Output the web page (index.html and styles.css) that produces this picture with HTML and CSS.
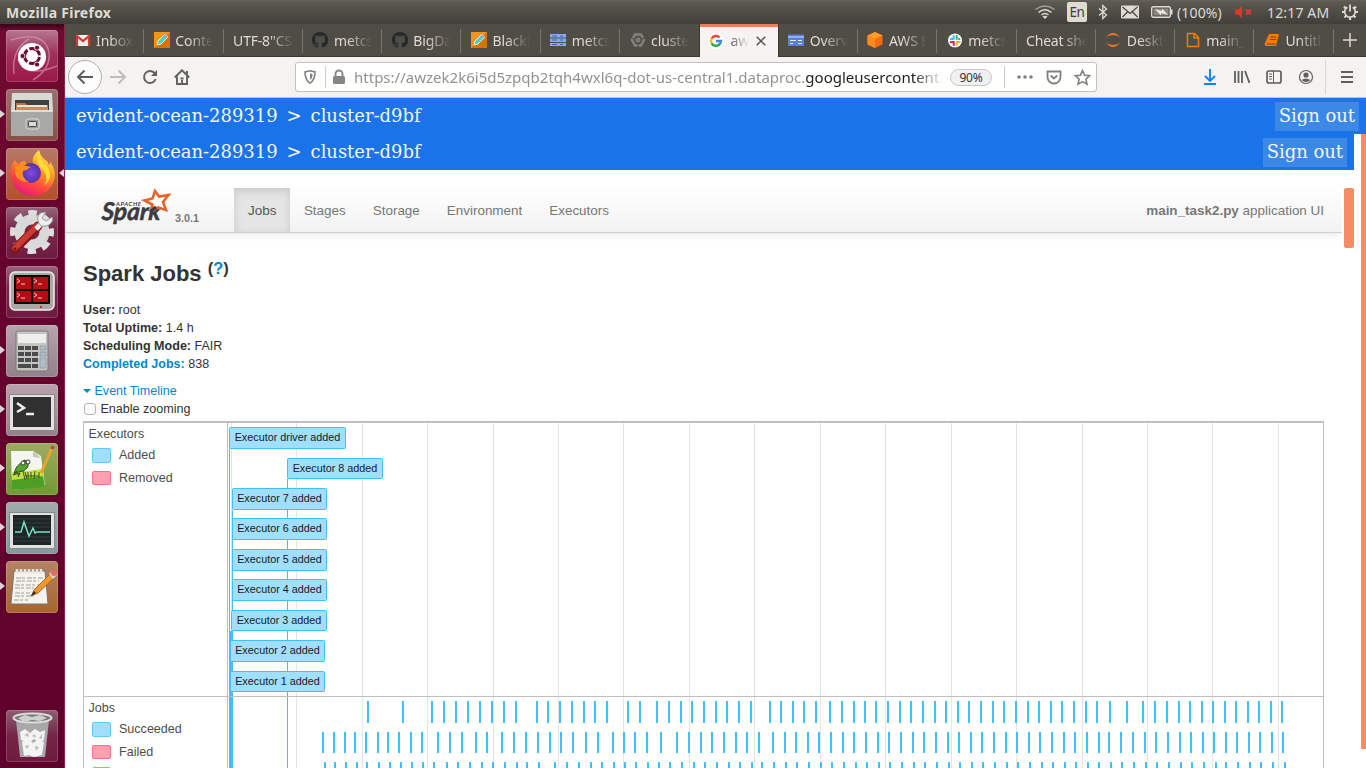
FILE: index.html
```html
<!DOCTYPE html>
<html lang="en">
<head>
<meta charset="utf-8">
<title>Spark Jobs</title>
<link rel="stylesheet" href="styles.css">
</head>
<body>
<div class="desktop">
<header class="panel">
  <span class="panel-title">Mozilla Firefox</span>
  <div class="indicators">
    <svg class="wifi" width="22" height="16" viewBox="0 0 22 16" fill="none" stroke="#dfdbd2" stroke-width="1.500"><path d="M1.500 5.500Q11-1.500 20.500 5.500" stroke="#a5a198"/><path d="M4.500 8.500Q11 3 17.500 8.500M7.500 11Q11 8 14.500 11"/><path d="M8.500 12.500Q11 10.800 13.500 12.500L11 15z" fill="#dfdbd2" stroke="none"/></svg>
    <span class="lang">En</span>
    <svg class="bt" width="12" height="18" viewBox="0 0 12 18" fill="none" stroke="#dfdbd2" stroke-width="1.300"><path d="M2 5.500L9.500 12 5.800 15.500V2.500L9.500 6 2 12.500"/></svg>
    <svg class="mail" width="18" height="14" viewBox="0 0 18 14"><rect width="18" height="13" y=".5" rx="1" fill="#dfdbd2"/><path d="M1.500 2L9 8.500 16.500 2M1.500 12l5-5M16.500 12l-5-5" fill="none" stroke="#45433d" stroke-width="1.200"/></svg>
    <svg class="batt" width="22" height="14" viewBox="0 0 22 14"><rect x=".7" y="1.700" width="18.600" height="10.600" rx="1.500" fill="none" stroke="#dfdbd2" stroke-width="1.400"/><path d="M20 4.500h1.500v5H20z" fill="#dfdbd2"/><path d="M2.500 3.500h15v7h-15z" fill="#8b8880"/><path d="M4 4l7 2V3.500L17 10l-7-2v2.500z" fill="#f0ece4"/></svg>
    <span class="percent">(100%)</span>
    <svg class="mute" width="18" height="14" viewBox="0 0 18 14"><path d="M0 4.500h3L7 1v12L3 9.500H0z" fill="#df382c"/><path d="M11 4.500l5 5M16 4.500l-5 5" stroke="#df382c" stroke-width="2"/></svg>
    <span class="clock">12:17 AM</span>
    <svg class="gear" width="18" height="18" viewBox="0 0 18 18" fill="none" stroke="#dfdbd2"><path d="M6.300 4.300a5.300 5.300 0 1 0 5.400 0" stroke-width="1.700"/><path d="M9 1.500v7" stroke-width="1.800"/><path d="M3 3.500l2 2M15 3.500l-2 2M1 9h2.500M14.500 9H17M3.500 14.500l2-2M14.500 14.500l-2-2M9 14.500V17" stroke-width="2.200"/></svg>
  </div>
</header>
<div class="workspace">
<nav class="launcher">
  <div class="tile dash"><svg viewBox="0 0 52 52"><g fill="none" stroke="#e7b4c8" stroke-opacity=".5" stroke-width="1.500"><path d="M5 10Q38 0 43 22Q45 39 27 50M8 44Q5 20 23 9M12 29Q19 49 51 36"/></g><circle cx="26" cy="27" r="14" fill="#fff"/><circle cx="26" cy="26" r="7.500" fill="none" stroke="#6d0930" stroke-width="3" stroke-dasharray="13.700 2" stroke-dashoffset="-1"/><g fill="#6d0930" stroke="#fff" stroke-width=".8"><circle cx="16.500" cy="26" r="2.500"/><circle cx="31" cy="17.700" r="2.500"/><circle cx="31" cy="34.500" r="2.500"/></g></svg></div>
  <div class="tile files run"><svg viewBox="0 0 52 52"><path d="M6 4h40l1 18H5z" fill="#d8d8d5"/><path d="M9 11h34v12H9z" fill="#414040"/><path d="M10 14h9l2 2h21v8H10z" fill="#bf7338"/><path d="M11 16h30v2H11z" fill="#f4e3ca"/><path d="M10 18h32v5H10z" fill="#d88843"/><path d="M5 21h42v26H5z" fill="#a8a8a6"/><path d="M5 21h42v2H5z" fill="#ddd"/><rect x="20" y="30" width="13" height="10" rx="2" fill="#999" stroke="#ddd"/><rect x="22.500" y="32.500" width="8" height="5" rx="1" fill="#ddd" stroke="#444"/></svg></div>
  <div class="tile firefox run focus"><svg viewBox="0 0 52 52"><defs><linearGradient id="fox" x1=".8" y1="0" x2=".3" y2="1"><stop stop-color="#fff04a"/><stop offset=".4" stop-color="#ff9a1f"/><stop offset=".75" stop-color="#ff3f45"/><stop offset="1" stop-color="#e31587"/></linearGradient><radialGradient id="globe"><stop stop-color="#7e49e4"/><stop offset="1" stop-color="#5931a8"/></radialGradient></defs><path d="M4 25Q5 17 9 12L12 16Q16 13 19 13L22 20Q24 15 27 16Q25 8 33 2Q34 9 41 13L43 17Q45 15 44 13Q52 25 47 35Q41 48 26 48Q7 46 4 25z" fill="url(#fox)"/><circle cx="25" cy="25" r="10" fill="url(#globe)"/><path d="M9 18Q19 17 25 19Q21 22 17 23Q15 30 23 34Q13 35 9 26z" fill="#ff8b21"/><path d="M34 3Q33 12 41 18Q48 29 39 37Q43 26 35 20Q28 13 34 3z" fill="#ffd93a"/></svg></div>
  <div class="tile settings"><svg viewBox="0 0 52 52"><circle cx="26" cy="25" r="18" fill="none" stroke="#dedede" stroke-width="8" stroke-dasharray="8 6.137" stroke-dashoffset="4"/><circle cx="26" cy="25" r="12.500" fill="none" stroke="#d9d9d9" stroke-width="10"/><path d="M9 42L32 19" stroke="#811616" stroke-width="9" stroke-linecap="round"/><path d="M9 41L31 19" stroke="#c83a32" stroke-width="6" stroke-linecap="round"/><path d="M30 22L36 16" stroke="#eee" stroke-width="5"/><path d="M40 5Q30 5 32 14Q34 22 43 18Q48 14 46 10L40 14 36 11z" fill="#eee" stroke="#999"/><circle cx="9" cy="42" r="1.500" fill="#701515"/></svg></div>
  <div class="tile term"><svg viewBox="0 0 52 52"><rect x="4" y="6" width="44" height="38" rx="5" fill="#aaa9a3" stroke="#eee" stroke-width="1.500"/><rect x="8" y="9" width="36" height="29" rx="1" fill="#160405"/><path d="M10 11h15v12H10zM27 11h15v12H27zM10 25h15v11H10zM27 25h15v11H27z" fill="#b60b13"/><path d="M11 13l3 2-3 2M15 18h4M28 13l3 2-3 2M32 18h4M11 27l3 2-3 2M15 32h4M28 27l3 2-3 2M32 32h4" fill="none" stroke="#f6c9c9"/><circle cx="35" cy="41" r="1" fill="#e00"/></svg></div>
  <div class="tile calc run"><svg viewBox="0 0 52 52"><rect x="10" y="6" width="32" height="40" rx="2" fill="#c5c4c2" stroke="#777"/><path d="M12 9h28v9H12z" fill="#eeeeed"/><g fill="#4b4c4b"><path d="M12 21h6v4h-6zM19 21h6v4h-6zM26 21h6v4h-6zM12 27h6v4h-6zM19 27h6v4h-6zM26 27h6v4h-6zM12 33h6v4h-6zM19 33h6v4h-6zM26 33h6v4h-6zM12 39h13v4H12zM26 39h6v4h-6z"/></g><path d="M34 21h6v4h-6zM34 27h6v4h-6zM34 33h6v10h-6z" fill="#aebdc8" stroke="#7c8790" stroke-width=".5"/></svg></div>
  <div class="tile prompt run"><svg viewBox="0 0 52 52"><rect x="3.500" y="10.500" width="45" height="36" fill="#e3e2e0" stroke="#8b8889"/><rect x="7" y="13" width="38" height="30" fill="#303030"/><path d="M11 19l7 5-7 4M20 30h8" fill="none" stroke="#eee" stroke-width="2.500"/></svg></div>
  <div class="tile npp run"><svg viewBox="0 0 52 52"><path d="M5 8h22l8 5 4 30-33 4z" fill="#f4f6ef"/><path d="M5 30l31-3 3 17-33 3z" fill="#4ba023"/><path d="M5 30l32-4 1 7-32 4z" fill="#c5dd45"/><path d="M27 7l8 8-8-1z" fill="#c5c9bb"/><path d="M8 30q3-9 8-10l2-3q5 1 4 4 1 4-5 7zM11 28l-4 4 7-2-2 4" fill="#55a431" stroke="#324d17"/><circle cx="17" cy="20" r="2" fill="#fff" stroke="#333"/><circle cx="22" cy="19" r="2" fill="#fff" stroke="#333"/><path d="M17 28l2 9M19 29l2 7M22 29v7M25 29v6M29 28l-1 8M33 29v6M19 33h14" stroke="#34581f" stroke-width="1"/><path d="M35 30l11-25" stroke="#e9a42a" stroke-width="3"/><path d="M46 6l1-3" stroke="#b34a5c" stroke-width="3.500"/></svg></div>
  <div class="tile monitor run"><svg viewBox="0 0 52 52"><rect x="3.500" y="10.500" width="45" height="36" fill="#e0e3e1" stroke="#838a88"/><rect x="7" y="13" width="38" height="30" fill="#1d2625"/><path d="M8 17h36M8 21h36M8 25h36M8 35h36M8 39h36" stroke="#3d4745" stroke-width=".7"/><path d="M9 30h6l3-10 5 14 4-8 2 5 2-1h13" fill="none" stroke="#75dfc5" stroke-width="1.500"/></svg></div>
  <div class="tile gedit run"><svg viewBox="0 0 52 52"><path d="M8 10h31l3 33H5z" fill="#f4f3ed" stroke="#777"/><g stroke="#a1a09b" stroke-width="1.100"><path d="M10 17h27M10 20h23M9 24h26M9 27h19M9 32h15M9 35h19M8 39h14" stroke-dasharray="5 1 3 2"/></g><path d="M11 8v5M15 8v5M19 8v5M23 8v5M27 8v5M31 8v5M35 8v5" stroke="#e8e7e3" stroke-width="2.500"/><path d="M25 35l4-7L44 13l4 4-16 15z" fill="#ef962d" stroke="#ad651c"/><path d="M43 13l3-3 5 4-4 4z" fill="#d3d3d0"/><circle cx="48" cy="12" r="3" fill="#e46b6c"/><path d="M25 35l3-5 2 2z" fill="#222"/></svg></div>
  <div class="tile trash"><svg viewBox="0 0 52 52"><path d="M10 10h33l-4 37H14z" fill="#a9a7a9"/><ellipse cx="26.500" cy="8" rx="19" ry="4.500" fill="#777" stroke="#ddd" stroke-width="2"/><path d="M12 8l7-3 7 2 8-2 7 3-7 3-8-1-8 2z" fill="#cfcfcf"/><g fill="#f3f3f3"><path d="M14 22l5-3 5 4 5-4 5 3 5-2-1 10-5 3-5-4-5 4-8-3zM16 32l6-4 5 5 6-4 5 3-2 13-8 2-5-2-5 1z"/></g><g fill="#bcbabd"><path d="M18 25l4-2 1 4zM26 26l3-2 1 4zM33 28l3-4v5zM19 36l4-1-2 4zM29 36l4 1-3 4z"/></g></svg></div>
</nav>
<main class="browser">
<div class="tabs">
  <div class="tab"><svg class="fav" viewBox="0 0 16 16"><path d="M1 3h14v11H1z" fill="#eee"/><path d="M2 14V4l6 5 6-5v10" fill="none" stroke="#d9352c" stroke-width="2.200"/></svg><span>Inbox (</span></div>
  <div class="tab"><svg class="fav" viewBox="0 0 16 16"><path d="M0 0h16v16H0z" fill="#f6921e"/><path d="M16 0v16H0z" fill="#d57500"/><path d="M3 13l1-4 7-7 3 3-7 7z" fill="#55cbc6" stroke="#e9f7d4"/><path d="M10 3l2-1 2 2-1 2z" fill="#ee88a5"/></svg><span>Content</span></div>
  <div class="tab nofav"><span>UTF-8''CSV</span></div>
  <div class="tab"><svg class="fav" viewBox="0 0 16 16"><use href="#cat"/></svg><span>metcs</span></div>
  <div class="tab"><svg class="fav" viewBox="0 0 16 16"><path id="cat" fill="#24292e" d="M8 0C3.580 0 0 3.580 0 8c0 3.540 2.290 6.530 5.470 7.590.4.070.55-.17.55-.38v-1.490c-2.010.37-2.530-.49-2.690-.94-.09-.23-.48-.94-.82-1.130-.28-.15-.68-.52-.01-.53.63-.01 1.080.58 1.230.82.72 1.210 1.870.87 2.330.66.070-.52.28-.87.51-1.070-1.780-.2-3.640-.89-3.640-3.950 0-.87.31-1.590.82-2.150-.08-.2-.36-1.020.08-2.120 0 0 .67-.21 2.200.82a7.600 7.600 0 0 1 4 0c1.530-1.040 2.200-.82 2.200-.82.44 1.100.16 1.920.08 2.120.51.56.82 1.270.82 2.150 0 3.070-1.870 3.750-3.650 3.950.29.25.54.73.54 1.480v2.200c0 .21.15.46.55.38A8 8 0 0 0 16 8c0-4.420-3.580-8-8-8z"/></svg><span>BigData</span></div>
  <div class="tab"><svg class="fav" viewBox="0 0 16 16"><path d="M0 0h16v16H0z" fill="#f6921e"/><path d="M16 0v16H0z" fill="#d57500"/><path d="M3 13l1-4 7-7 3 3-7 7z" fill="#55cbc6" stroke="#e9f7d4"/><path d="M10 3l2-1 2 2-1 2z" fill="#ee88a5"/></svg><span>Blackb</span></div>
  <div class="tab"><svg class="fav" viewBox="0 0 16 16"><path d="M0 2h16v3.500H0zM0 6.500h16V10H0zM0 11h16v3H0z" fill="#84a9f5"/><path d="M2 4h5M10 4h3M2 8h5M10 8h3M2 12.500h5M10 12.500h3" stroke="#3764bd" stroke-width="1.200"/></svg><span>metcs</span></div>
  <div class="tab"><svg class="fav" viewBox="0 0 16 16"><path d="M5 2.500h6L14 8l-3 5.500H5L2 8z" fill="none" stroke="#83817d" stroke-width="2.500" stroke-dasharray="10 1"/><circle cx="8" cy="8" r="2" fill="#77756f" stroke="#8d8b87"/></svg><span>cluster</span></div>
  <div class="tab active"><svg class="fav" viewBox="0 0 16 16"><circle cx="8" cy="8" r="8" fill="#fff"/><g fill="none" stroke-width="2.400"><path d="M3.600 5.500A5 5 0 0 1 11.500 4.500" stroke="#ea4335"/><path d="M3.600 5.500a5 5 0 0 0 0 5" stroke="#fbbc05"/><path d="M3.600 10.500a5 5 0 0 0 7.600 1" stroke="#34a853"/><path d="M11 11.700A5 5 0 0 0 13 8H8" stroke="#4285f4"/></g></svg><span>awz</span><svg class="close" viewBox="0 0 10 10"><path d="M.7.7l8.600 8.600M9.300.7L.7 9.300" stroke="#555" stroke-width="1.500"/></svg></div>
  <div class="tab"><svg class="fav" viewBox="0 0 16 16"><path d="M0 2.500h16v11.500H0z" fill="#5880d7"/><path d="M0 4h16v2H0z" fill="#91b0f3"/><path d="M2 8.500h6M2 11.500h3M10 11.500h4M10 8.500h4" stroke="#e2edff" stroke-width="1.100"/></svg><span>Overview</span></div>
  <div class="tab"><svg class="fav" viewBox="0 0 16 16"><path d="M8 0l7.500 3.500v9L8 16 .5 12.500v-9z" fill="#f56a16"/><path d="M8 0l7.500 3.500L8 7 .5 3.500z" fill="#ff9f2a"/><path d="M.5 3.500L8 7v9L.5 12.500z" fill="#ff8a20"/></svg><span>AWS Ed</span></div>
  <div class="tab"><svg class="fav" viewBox="0 0 16 16"><circle cx="8" cy="8.500" r="7" fill="#fff"/><g stroke-width="2" stroke-linecap="round"><path d="M6.700 4v2.500M3.700 7h3" stroke="#36c5f0"/><path d="M9.700 3.700V7M12 7h.5" stroke="#2eb67d"/><path d="M9.700 10h3M9.700 10v3" stroke="#ecb22e"/><path d="M3.700 10h3v3" fill="none" stroke="#e01e5a"/></g></svg><span>metcs</span></div>
  <div class="tab nofav"><span>Cheat she</span></div>
  <div class="tab"><svg class="fav" viewBox="0 0 16 16"><path d="M1 5q7-8 14 0-7-4-14 0zM1 11q7 4 14 0-7 8-14 0z" fill="#f37726"/></svg><span>Desktop</span></div>
  <div class="tab"><svg class="fav" viewBox="0 0 16 16"><path d="M2.500 1.500h7l4 4v9h-11zM9 2v4h4" fill="none" stroke="#f57c00" stroke-width="1.500"/></svg><span>main_t</span></div>
  <div class="tab"><svg class="fav" viewBox="0 0 16 16"><path d="M5 2h10l-3 12H2q-2-1-1-3z" fill="#f57c00"/><path d="M6.500 5h6M6 7.500h6M2.500 12h9" stroke="#504d45" stroke-width="1"/></svg><span>Untitled</span></div>
  <div class="newtab"><svg viewBox="0 0 14 14"><path d="M7 0v14M0 7h14" stroke="#dedad2" stroke-width="1.500"/></svg></div>
</div>
<div class="toolbar">
  <div class="back"><svg width="18" height="16" viewBox="0 0 18 16"><path d="M17 8H2M8.500 1.500L2 8l6.500 6.500" fill="none" stroke="#5c5c5c" stroke-width="1.900"/></svg></div>
  <svg class="fwd" width="18" height="16" viewBox="0 0 18 16"><path d="M1 8h15M9.500 1.500L16 8l-6.500 6.500" fill="none" stroke="#bdbcbb" stroke-width="1.900"/></svg>
  <svg class="reload" width="16" height="16" viewBox="0 0 16 16"><path d="M13.700 10A6 6 0 1 1 12.500 4" fill="none" stroke="#5f5f5f" stroke-width="1.900"/><path d="M15 1v6H9z" fill="#5f5f5f"/></svg>
  <svg class="home" width="16" height="16" viewBox="0 0 16 16"><path d="M.8 8.500L8 1.300l7.200 7.200M3 7.500V15h10V7.500M8 15v-4" fill="none" stroke="#5f5f5f" stroke-width="1.900"/><path d="M12 2h2v4l-2-2zM6.500 8.500h3v2h-3z" fill="#5f5f5f"/></svg>
  <div class="urlbar">
    <svg class="shield" width="14" height="16" viewBox="0 0 14 16"><path d="M7 1.800l5 1.200q0 8-5 11.200Q2 11 2 3z" fill="none" stroke="#808080" stroke-width="1.600"/><path d="M7 4.500l2.500.5q0 4.500-2.500 6z" fill="#808080"/></svg>
    <i class="sep"></i>
    <svg class="lock" width="14" height="16" viewBox="0 0 14 16"><path d="M3.500 8V5a3.500 3.500 0 0 1 7 0v3" fill="none" stroke="#858585" stroke-width="1.900"/><rect x="1" y="7" width="12" height="8" rx="1.500" fill="#858585"/></svg>
    <span class="url">https://awzek2k6i5d5zpqb2tqh4wxl6q-dot-us-central1.dataproc.<b>googleusercontent.</b></span>
    <span class="zoom">90%</span>
    <i class="sep sep2"></i>
    <svg class="dots" width="16" height="4" viewBox="0 0 16 4" fill="#808080"><circle cx="2" cy="2" r="1.800"/><circle cx="8" cy="2" r="1.800"/><circle cx="14" cy="2" r="1.800"/></svg>
    <svg class="pocket" width="16" height="15" viewBox="0 0 16 15" fill="none" stroke="#808080" stroke-width="1.800"><path d="M1.500 1.500h13v5.500a6.500 6.500 0 0 1-13 0z"/><path d="M4.800 5.500L8 8.500l3.200-3"/></svg>
    <svg class="star" width="17" height="17" viewBox="0 0 17 17"><path d="M8.500 1.500l2.100 4.700 5 .5-3.700 3.500 1.100 5-4.500-2.600L4 15.200l1.100-5L1.400 6.700l5-.5z" fill="none" stroke="#808080" stroke-width="1.600"/></svg>
  </div>
  <svg class="dl" width="14" height="16" viewBox="0 0 14 16"><path d="M7 0v12M2 7l5 5 5-5M1 15h12" fill="none" stroke="#0a84ff" stroke-width="1.900"/></svg>
  <svg class="lib" width="16" height="14" viewBox="0 0 16 14"><path d="M1 1v12M4.500 1v12M8 1v12M11 1l4.500 12" stroke="#5f5f5f" stroke-width="1.800"/></svg>
  <svg class="side" width="16" height="14" viewBox="0 0 16 14"><rect x="1" y="1" width="14" height="12" rx="2" fill="none" stroke="#5f5f5f" stroke-width="1.700"/><path d="M7.500 1v12M3 4h3M3 6.500h3M3 9h3" stroke="#5f5f5f"/></svg>
  <svg class="acct" width="16" height="16" viewBox="0 0 16 16"><circle cx="8" cy="8" r="6.500" fill="none" stroke="#5f5f5f" stroke-width="1.200"/><circle cx="8" cy="6" r="2.600" fill="#5f5f5f"/><path d="M3.500 11Q8 8 12.500 11 8 15 3.500 11z" fill="#5f5f5f"/></svg>
  <i class="toolsep"></i>
  <svg class="menu" width="12" height="12" viewBox="0 0 12 12"><path d="M0 1h12M0 6h12M0 11h12" stroke="#5f5f5f" stroke-width="1.800"/></svg>
</div>
<div class="gateway"><span>evident-ocean-289319</span><span>&gt;</span><span>cluster-d9bf</span><a class="signout">Sign out</a></div>
<div class="outer">
<div class="frame">
  <div class="gateway inner"><span>evident-ocean-289319</span><span>&gt;</span><span>cluster-d9bf</span><a class="signout">Sign out</a></div>
  <div class="framebody">
  <div class="sparkpage">
    <div class="navbar">
      <svg class="logo" width="72" height="40" viewBox="0 0 72 40"><g transform="skewX(-4)"><text x="4.500" y="32.500" textLength="59" lengthAdjust="spacingAndGlyphs" class="logo-word">Spark</text></g><text x="17" y="17.500" textLength="25" class="logo-apache">APACHE</text><path d="M56 3l4 5.500 9.500-1.500-5.500 7 3 8-8-2.500-6 3 .5-6-8-4 8-2z" fill="#fff" stroke="#e8622b" stroke-width="2.600"/><path d="M51 24l6-5" stroke="#3c3a3e" stroke-width="3"/></svg>
      <span class="version">3.0.1</span>
      <div class="links"><a class="current">Jobs</a><a>Stages</a><a>Storage</a><a>Environment</a><a>Executors</a></div>
      <p class="app"><b>main_task2.py</b> application UI</p>
    </div>
    <div class="content">
      <h3>Spark Jobs <sup>(<a>?</a>)</sup></h3>
      <ul class="summary">
        <li><b>User:</b> root</li><li><b>Total Uptime:</b> 1.4 h</li><li><b>Scheduling Mode:</b> FAIR</li><li><a><b>Completed Jobs:</b></a> 838</li>
      </ul>
      <div class="expand"><i class="caret"></i><a>Event Timeline</a></div>
      <label class="zooming"><i class="box"></i>Enable zooming</label>
      <div class="timeline">
        <div class="groups">
          <div class="group executors"><div class="gname">Executors</div><div class="key"><i class="blue"></i>Added</div><div class="key"><i class="red"></i>Removed</div></div>
          <div class="group"><div class="gname">Jobs</div><div class="key"><i class="blue"></i>Succeeded</div><div class="key"><i class="red"></i>Failed</div><div class="key"><i class="green"></i></div></div>
        </div>
        <svg class="chart" width="1095" height="345" viewBox="228 423 1095 345">
          <path id="grid" class="grid"/>
          <path class="lead" d="M229.500 449V768M287.500 479V768M232.500 510V768"/>
          <path class="lead wide" d="M231.500 631V768"/>
          <path class="lead fat" d="M231 692V768"/>
          <path class="rule" d="M228 696.500H1323"/>
          <path id="jobs" class="jobs"/>
          <g id="executors"></g>
        </svg>
      </div>
    </div>
  </div>
  <div class="thumb"></div>
  </div>
</div>
<div class="outerthumb"></div>
</div>
</main>
</div>
</div>
<script src="script.js"></script>
</body>
</html>
```
FILE: styles.css
```css
* { box-sizing: border-box; }
body { margin: 0; overflow: hidden; font-family: "Liberation Sans", Arial, sans-serif; }
svg { display: block; flex: none; }
.desktop { width: 1366px; height: 768px; overflow: hidden; display: flex; flex-direction: column; }
.panel { height: 24px; flex: none; display: flex; align-items: center; justify-content: space-between; padding: 0 7px 0 6px; background: linear-gradient(#646157, #5b584f 12%, #403f3a); color: #dfdbd2; font-family: "Noto Sans", "Open Sans", sans-serif; font-size: 14px; }
.panel-title { font-weight: 700; font-size: 14px; letter-spacing: .25px; }
.indicators { display: flex; align-items: center; }
.lang { margin-left: 11px; width: 20px; height: 20px; background: #dfdbd2; color: #403e39; border-radius: 2px; text-align: center; line-height: 20px; font-size: 13.500px; letter-spacing: -.5px; }
.bt { margin-left: 10px; }
.mail { margin-left: 12px; }
.batt { margin-left: 12px; }
.percent { margin-left: 4px; width: 46px; white-space: nowrap; font-size: 14px; letter-spacing: .15px; }
.mute { margin-left: 12px; }
.clock { margin-left: 14px; width: 63px; white-space: nowrap; letter-spacing: .15px; font-size: 14px; }
.gear { margin-left: 11px; }

.workspace { display: flex; flex: 1; min-height: 0; }
.launcher { width: 65px; flex: none; padding: 6px 0 0 6px; display: flex; flex-direction: column; gap: 7px; background: linear-gradient(#38051b, #710b31 7px, #66042d 30%, #5f032b); border-right: 1px solid #8a2851; }
.tile { position: relative; width: 52px; height: 52px; flex: none; border-radius: 4px; box-shadow: inset 0 0 0 1px rgba(255,255,255,.16); }
.tile svg { width: 52px; height: 52px; }
.dash { background: linear-gradient(#b77890, #9f325b 45%, #9c1747); }
.files { background: linear-gradient(#9d6e6d, #885046); }
.firefox { background: linear-gradient(#b77969, #b44f29); }
.settings, .term { background: linear-gradient(#96657c, #792a4b 40%, #701b40); }
.calc, .prompt { background: linear-gradient(#b9a3ac, #92818a); }
.npp { background: linear-gradient(#9dab64, #729a33); }
.monitor { background: linear-gradient(#a2aaab, #819a99); }
.gedit { background: linear-gradient(#b18466, #a8652d); }
.trash { margin-top: 90px; background: linear-gradient(#8d6071, #742446 50%, #701b3f); }
.run::before { content: ""; position: absolute; left: -6px; top: 21px; border: 4.500px solid transparent; border-left: 5px solid #d9d5d6; border-right: 0; }
.focus::after { content: ""; position: absolute; right: -6px; top: 21px; border: 4.500px solid transparent; border-right: 5px solid #d9d5d6; border-left: 0; }

.browser { flex: 1; min-width: 0; display: flex; flex-direction: column; background: #fff; }
.tabs { height: 33px; flex: none; display: flex; background: #504d45; border-bottom: 1px solid #393731; font-family: "Noto Sans", "Open Sans", sans-serif; font-size: 14px; color: #dfdbd2; }
.tab { width: 79.300px; flex: none; display: flex; align-items: center; padding-left: 9.500px; position: relative; }
.tab::after { content: ""; position: absolute; right: 0; top: 5px; width: 1px; height: 24px; background: #77746c; }
.tab:nth-child(8)::after, .active::after { display: none; }
.fav { width: 16px; height: 16px; }
.tab span { margin-left: 5.500px; width: 38px; overflow: hidden; white-space: nowrap; letter-spacing: -.1px; -webkit-mask-image: linear-gradient(90deg, #000 35%, transparent); mask-image: linear-gradient(90deg, #000 35%, transparent); }
.tab.nofav span { margin-left: 0; width: 61px; letter-spacing: -.2px; -webkit-mask-image: linear-gradient(90deg, #000 60%, transparent); mask-image: linear-gradient(90deg, #000 60%, transparent); }
.tab.active { height: 33px; background: #f5f4f2; border: 1px solid #393731; border-top: 0; border-bottom: 0; box-shadow: inset 0 3px #ef8055; color: #555; padding-left: 8px; }
.tab.active span { width: 19px; margin-left: 6px; -webkit-mask-image: linear-gradient(90deg, #000, transparent); mask-image: linear-gradient(90deg, #000, transparent); }
.close { width: 10px; height: 10px; margin-left: 7px; }
.newtab { padding: 9px 0 0 9px; }
.newtab svg { width: 14px; height: 14px; }

.toolbar { height: 41px; flex: none; display: flex; align-items: center; background: #f4f3f1; border-bottom: 1px solid #c5c2bd; padding-left: 3px; }
.back { width: 34px; height: 34px; flex: none; border-radius: 50%; background: #fdfdfd; border: 1px solid #b0aeab; display: flex; align-items: center; justify-content: center; }
.fwd { margin-left: 7px; }
.reload { margin-left: 15px; }
.home { margin-left: 16px; }
.urlbar { margin-left: 105px; width: 802px; height: 30px; flex: none; display: flex; align-items: center; background: #fff; border: 1px solid #c2c0bd; border-radius: 3px; }
.shield { margin-left: 7px; }
.sep { width: 1px; height: 22px; background: #ccc; margin: 0 6px 0 8px; }
.url { margin-left: 8px; width: 589px; overflow: hidden; white-space: nowrap; font: 15px "Noto Sans", "Open Sans", sans-serif; letter-spacing: .01px; color: #929292; -webkit-mask-image: linear-gradient(90deg, #000 95%, transparent); mask-image: linear-gradient(90deg, #000 95%, transparent); }
.url b { font-weight: 400; color: #222; }
.zoom { margin-left: 7px; width: 42px; height: 17px; border: 1px solid #c6c6c6; border-radius: 9px; background: #f1f1f1; text-align: center; font: 12px/15px "Noto Sans", "Open Sans", sans-serif; letter-spacing: -.2px; color: #333; }
.sep2 { margin: 0 0 0 12px; }
.dots { margin-left: 12px; }
.pocket { margin-left: 13px; }
.star { margin-left: 12px; }
.dl { margin-left: 106px; }
.lib { margin-left: 17px; }
.side { margin-left: 16px; }
.acct { margin-left: 16px; }
.toolsep { width: 1px; height: 34px; background: #d8d6d3; margin-left: 11px; }
.menu { margin-left: 15px; }

.gateway { height: 36px; flex: none; background: #1a73e8; color: #f2f7ff; display: flex; align-items: center; gap: 9px; padding: 0 7px 2px 11px; font: 18px "DejaVu Serif", serif; letter-spacing: -.04px; }
.signout { margin-left: auto; height: 29px; padding: 0 4px; line-height: 28px; background: #3b88e7; position: relative; top: 1px; }
.outer { flex: 1; min-height: 0; display: flex; justify-content: space-between; }
.frame { width: 1289px; display: flex; flex-direction: column; }
.outerthumb { width: 5px; height: 615px; background: #f48d65; }
.framebody { flex: 1; min-height: 0; display: flex; }
.sparkpage { width: 1277px; }
.thumb { margin: 18px 0 0 2px; width: 10px; height: 60px; border-radius: 2px; background: #f48d65; }
.navbar { height: 63px; display: flex; padding: 18px 18px 0 34px; background: linear-gradient(#fff 25%, #f2f2f2); border-bottom: 1px solid #d0d0d0; box-shadow: 0 1px 9px rgba(0,0,0,.1); clip-path: inset(0 0 -12px 0); font-size: 13.450px; color: #777; }
.logo-word { font: italic 700 24.500px Lato, sans-serif; fill: #3c3a3e; stroke: #3c3a3e; stroke-width: .5px; }
.logo-apache { font: italic 700 6px Lato, sans-serif; fill: #3c3a3e; }
.version { margin: 24px 0 0 4px; width: 59px; font-size: 10.800px; line-height: 12px; font-weight: 700; }
.links { display: flex; }
.links a { padding: 0 13.500px; line-height: 45px; }
.links .current { padding: 0 14px; background: #e5e5e5; box-shadow: inset 0 3px 8px rgba(0,0,0,.125); color: #555; }
.app { margin: 0 0 0 auto; line-height: 45px; }
.content { padding: 23px 18px 0; font-size: 12.560px; line-height: 18px; color: #333; }
.content a { color: #08c; }
h3 { margin: 0; font-size: 22px; line-height: 36px; color: #333; }
sup { font-size: 16.500px; line-height: 0; position: relative; top: -.45em; vertical-align: baseline; }
.summary { list-style: none; margin: 9px 0 0; padding: 0; }
.expand { display: flex; align-items: center; margin-top: 9px; }
.caret { border: 4px solid transparent; border-top-color: #08c; border-bottom: 0; margin-right: 3.500px; }
.zooming { display: flex; align-items: center; }
.box { width: 12px; height: 12px; margin: 0 4.500px 0 1px; border: 1px solid #b5b5b5; border-radius: 3px; background: #fafafa; }
.timeline { width: 1241px; height: 370px; margin-top: 3px; display: flex; border: 1px solid #bfbfbf; border-top-width: 2px; }
.groups { width: 144px; flex: none; border-right: 1px solid #bfbfbf; color: #4d4d4d; }
.group { padding: 2px 0 0 4.500px; }
.executors { height: 274px; border-bottom: 1px solid #bfbfbf; }
.gname { height: 18px; margin-bottom: 1px; }
.key { height: 22.700px; display: flex; align-items: center; }
.key i { width: 19px; height: 14.500px; border: 1px solid; border-radius: 2px; margin: 0 8px 0 3.500px; }
.key .blue { background: #a0dfff; border-color: #5fc9fc; }
.key .red { background: #ffa1b0; border-color: #fb718a; }
.key .green { background: #a2fcc0; border-color: #36f572; }
.grid { stroke: #e5e5e5; }
.lead { stroke: #3ec0ff; fill: none; }
.wide { stroke-width: 3; }
.fat { stroke-width: 4; }
.rule { stroke: #bfbfbf; }
.jobs { stroke: #3ec0ff; stroke-width: 2; }
.event rect { fill: #a0dfff; stroke: #3ec0ff; }
.event text { font: 10.800px "Liberation Sans", Arial, sans-serif; fill: #1a1a1a; }
```
FILE: script.js
```js
const gridLines = [231, 296, 362, 427, 493, 558, 623, 689, 754, 820, 885, 951, 1016, 1082, 1147, 1212, 1278];
document.getElementById('grid').setAttribute('d', gridLines.map(x => `M${x + 0.5} 423V768`).join(''));

const rows = [
  [701, 22, [368,403,432,444,456,468,480,492,504,516,537,548,560,572,584,595,607,628,640,657,669,681,692,704,716,727,739,751,770,781,793,804,816,830,842,854,865,876,888,900,911,923,935,946,958,969,981,993,1004,1016,1028,1039,1051,1062,1074,1086,1097,1110,1127,1143,1155,1167,1179,1190,1202,1213,1225,1236,1248,1259,1271,1282]],
  [732, 21, [323,334,345,355,366,378,388,399,411,422,438,450,462,476,487,502,514,526,538,550,561,573,586,598,613,624,635,647,661,677,689,701,712,724,736,747,759,773,785,796,808,819,831,843,854,866,878,889,901,913,924,936,948,959,971,982,994,1006,1017,1029,1040,1052,1064,1075,1087,1099,1109,1121,1133,1145,1156,1168,1180,1191,1203,1214,1226,1237,1249,1260,1272,1283]],
  [762, 21, [325,335,346,357,367,379,390,401,412,423,434,447,458,470,482,493,505,517,527,539,555,567,579,591,602,614,625,636,648,659,670,682,694,705,717,729,740,752,762,774,786,797,809,821,832,844,856,867,879,890,902,914,925,937,949,960,972,983,995,1007,1018,1030,1042,1053,1065,1076,1088,1099,1111,1122,1134,1146,1157,1169,1181,1192,1204,1216,1226,1238,1250,1261,1273,1285]]
];
document.getElementById('jobs').setAttribute('d', rows.map(([y, h, xs]) => xs.map(x => `M${x} ${y}v${h}`).join('')).join(''));

const events = [
  ['driver', 229, 427, 117, 22], ['8', 287, 458, 96, 21], ['7', 232, 488, 95, 22],
  ['6', 232, 518, 95, 22], ['5', 232, 549, 95, 22], ['4', 232, 579, 95, 22],
  ['3', 231, 610, 96, 21], ['2', 230, 640, 95, 22], ['1', 230, 671, 95, 21]
];
document.getElementById('executors').innerHTML = events.map(([name, x, y, w, h]) =>
  `<g class="event"><rect x="${x + 0.5}" y="${y + 0.5}" width="${w - 1}" height="${h - 1}" rx="1"/><text x="${x + w / 2}" y="${y + 14}" text-anchor="middle">Executor ${name} added</text></g>`).join('');
```
